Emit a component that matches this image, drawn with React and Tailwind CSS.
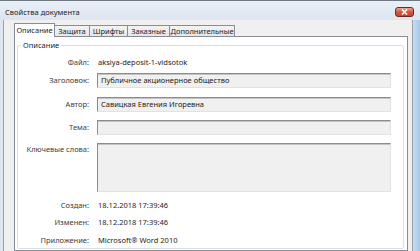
import React from "react";

const tabs = [
  { label: "Описание", w: "w-[41px]", active: true },
  { label: "Защита", w: "w-[36px]" },
  { label: "Шрифты", w: "w-[39px]" },
  { label: "Заказные", w: "w-[43px]" },
  { label: "Дополнительные", w: "w-[66px]" },
];

const Field = ({ children, tall }) => (
  <div
    className={`flex-1 mr-[12px] bg-[#f0f0f0] border-t border-l border-[#8c8c8c] border-r border-b border-r-[#e2e2e2] border-b-[#e2e2e2] shadow-[inset_0_1px_0_#c4c4c4] pl-[3px] flex ${
      tall ? "h-[49px] items-start" : "h-[15px] items-center"
    } text-[#1a1a1a]`}
  >
    {children}
  </div>
);

const Label = ({ children, top }) => (
  <div
    className={`w-[71px] shrink-0 text-right text-[#3c3c3c] mr-[8px] ${
      top ? "self-start pt-[1px]" : ""
    }`}
  >
    {children}
  </div>
);

const App = () => {
  return (
    <div className="w-[420px] h-[251px] overflow-hidden flex flex-col border-t border-[#6f7984] bg-[#dde7f2] font-['Noto_Sans',sans-serif] text-[7.5px] leading-[11px] text-[#1e1e1e]">
      {/* Title bar */}
      <div className="h-[19px] shrink-0 flex items-start justify-between pl-[5px] pr-[6px] bg-gradient-to-b from-[#e9eff6] to-[#dce6f1]">
        <span className="mt-[6px] text-[#1c1c1c]">Свойства документа</span>
        <button className="mt-[6px] w-[19px] h-[10px] rounded-[3px] border border-[#6e2a22] bg-gradient-to-b from-[#e9a897] via-[#d0573f] to-[#c8432e] flex items-center justify-center">
          <svg width="7" height="6" viewBox="0 0 7 6">
            <path d="M1 0.5 L6 5.5 M6 0.5 L1 5.5" stroke="#fff" strokeWidth="1.6" />
          </svg>
        </button>
      </div>

      <div className="flex flex-1 min-h-0">
        <div className="w-[3px] bg-[#dde7f2]" />
        <div className="flex-1 flex flex-col bg-[#f0f0f0] border-l border-r border-[#98a0a8] pl-[10px] pr-[4px] pt-[3px]">
          {/* Tabs */}
          <div className="flex items-end h-[13px] relative z-10">
            {tabs.map((t) =>
              t.active ? (
                <div
                  key={t.label}
                  className={`${t.w} h-[14px] -mb-px bg-white border-t border-l border-r border-[#898c95] flex items-center justify-center pb-[1px]`}
                >
                  {t.label}
                </div>
              ) : (
                <div
                  key={t.label}
                  className={`${t.w} h-[11px] -ml-px bg-gradient-to-b from-[#f3f3f3] to-[#e6e6e6] border-t border-l border-r border-[#898c95] flex items-center justify-center whitespace-nowrap text-[#1e1e1e]`}
                >
                  {t.label}
                </div>
              )
            )}
          </div>

          {/* Panel */}
          <div className="flex-1 bg-white border border-[#898c95] pl-[2px] pr-[3px] pt-[2px]">
            <fieldset className="border border-[#d5dfe5] rounded-[2px] pb-[1px]">
              <legend className="ml-[3px] px-[2px] leading-[12px] text-[#1e1e1e]">
                Описание
              </legend>

              <div className="flex items-center h-[15px] mt-[4px]">
                <Label>Файл:</Label>
                <span className="text-[#1a1a1a] pl-[1px]">aksiya-deposit-1-vidsotok</span>
              </div>

              <div className="flex items-center mt-[3px]">
                <Label>Заголовок:</Label>
                <Field>Публичное акционерное общество</Field>
              </div>

              <div className="flex items-center mt-[9px]">
                <Label>Автор:</Label>
                <Field>Савицкая Евгения Игоревна</Field>
              </div>

              <div className="flex items-center mt-[8px]">
                <Label>Тема:</Label>
                <Field />
              </div>

              <div className="flex items-center mt-[8px]">
                <Label top>Ключевые слова:</Label>
                <Field tall />
              </div>

              <div className="flex items-center h-[14px] mt-[6px]">
                <Label>Создан:</Label>
                <span className="pl-[1px]">18.12.2018 17:39:46</span>
              </div>

              <div className="flex items-center h-[14px] mt-[3px]">
                <Label>Изменен:</Label>
                <span className="pl-[1px]">18.12.2018 17:39:46</span>
              </div>

              <div className="flex items-center h-[14px] mt-[4px]">
                <Label>Приложение:</Label>
                <span className="pl-[1px]">Microsoft® Word 2010</span>
              </div>
            </fieldset>
          </div>
        </div>
        <div className="w-[7px] bg-gradient-to-r from-[#c9dcf0] to-[#a6c6ea]" />
      </div>
    </div>
  );
};

export default App;
